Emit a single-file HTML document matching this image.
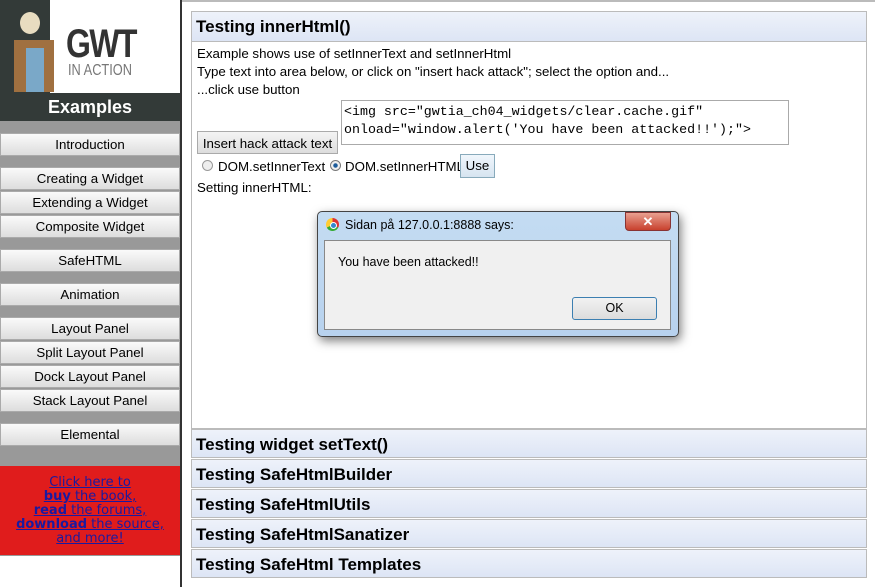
<!DOCTYPE html>
<html><head><style>
body{margin:0;width:875px;height:587px;overflow:hidden;background:#fff;font-family:"Liberation Sans",Arial,sans-serif;position:relative}
.abs{position:absolute}
#side{left:0;top:0;width:180px;height:556px;background:#999;border-right:2px solid #333}
#vline{left:180px;top:0;width:2px;height:587px;background:#333}
.btn{position:absolute;left:0;width:178px;height:21px;border:1px solid #aaa;background:linear-gradient(#fafafa,#ddd);font-size:13.3px;text-align:center;line-height:21px;color:#000}
.hd{position:absolute;left:191px;height:29px;border:1px solid #bbb;background:linear-gradient(#eef2fa,#dde5f5);font-size:17px;font-weight:bold;line-height:29px;padding-left:4px;box-sizing:border-box;width:676px}
.t{font-size:13.3px;position:absolute;left:197px}
</style></head><body>
<div class="abs" style="left:0;top:0;width:875px;height:2px;background:#bbb"></div>
<div class="abs" id="side"></div>
<div class="abs" style="left:0;top:0;width:180px;height:93px;background:#fff"></div>
<div class="abs" style="left:0;top:0;width:50px;height:93px;background:#333a38"></div>
<div class="abs" style="left:20px;top:12px;width:20px;height:22px;border-radius:50%;background:#e8dcc0"></div>
<div class="abs" style="left:14px;top:40px;width:40px;height:52px;background:#a07040"></div>
<div class="abs" style="left:26px;top:48px;width:18px;height:44px;background:#7aa8c8"></div>
<div class="abs" style="left:66px;top:22px;font-size:40px;font-weight:bold;color:#333;letter-spacing:-2px;transform:scaleX(.8);transform-origin:left">GWT</div>
<div class="abs" style="left:68px;top:62px;font-size:16px;color:#777;transform:scaleX(.8);transform-origin:left">IN ACTION</div>
<div class="abs" style="left:0;top:93px;width:180px;height:28px;background:#333a38;color:#fff;font-size:18px;font-weight:bold;text-align:center;line-height:28px">Examples</div>
<div class="btn" style="top:133px">Introduction</div>
<div class="btn" style="top:167px">Creating a Widget</div>
<div class="btn" style="top:191px">Extending a Widget</div>
<div class="btn" style="top:215px">Composite Widget</div>
<div class="btn" style="top:249px">SafeHTML</div>
<div class="btn" style="top:283px">Animation</div>
<div class="btn" style="top:317px">Layout Panel</div>
<div class="btn" style="top:341px">Split Layout Panel</div>
<div class="btn" style="top:365px">Dock Layout Panel</div>
<div class="btn" style="top:389px">Stack Layout Panel</div>
<div class="btn" style="top:423px">Elemental</div>
<div class="abs" style="left:0;top:466px;width:180px;height:89px;background:#e01c1c;font-family:'DejaVu Sans',sans-serif;font-size:13px;line-height:14px;text-align:center;color:#1a1aa0;padding-top:10px;box-sizing:border-box"><u>Click here to<br><b>buy</b> the book,<br><b>read</b> the forums,<br><b>download</b> the source,<br>and more!</u></div>
<div class="abs" id="vline"></div>
<div class="abs" style="left:191px;top:11px;width:676px;height:418px;border:1px solid #bbb;box-sizing:border-box"></div>
<div class="hd" style="top:11px;height:31px">Testing innerHtml()</div>
<div class="t" style="top:46px">Example shows use of setInnerText and setInnerHtml</div>
<div class="t" style="top:64px">Type text into area below, or click on "insert hack attack"; select the option and...</div>
<div class="t" style="top:82px">...click use button</div>
<div class="abs" style="left:341px;top:100px;width:448px;height:45px;border:1px solid #aaa;box-sizing:border-box;font-family:'Liberation Mono',monospace;font-size:13.3px;line-height:18px;padding:2px 2px;white-space:nowrap">&lt;img src="gwtia_ch04_widgets/clear.cache.gif"<br>onload="window.alert('You have been attacked!!');"&gt;</div>
<div class="abs" style="left:197px;top:131px;width:141px;height:23px;border:1px solid #aaa;background:linear-gradient(#f4f4f4,#ddd);font-size:13.3px;text-align:center;line-height:23px;box-sizing:border-box">Insert hack attack text</div>
<div class="abs" style="left:202px;top:160px;width:11px;height:11px;border:1px solid #999;border-radius:50%;background:#eee;box-sizing:border-box"></div>
<div class="t" style="left:218px;top:159px">DOM.setInnerText</div>
<div class="abs" style="left:330px;top:160px;width:11px;height:11px;border:1px solid #777;border-radius:50%;background:radial-gradient(#1a5a9a 30%,#eee 40%);box-sizing:border-box"></div>
<div class="t" style="left:345px;top:159px">DOM.setInnerHTML</div>
<div class="abs" style="left:460px;top:154px;width:35px;height:24px;border:1px solid #8ab;background:linear-gradient(#f0f6fc,#d6e4f0);font-size:13.3px;text-align:center;line-height:22px;box-sizing:border-box">Use</div>
<div class="t" style="top:180px">Setting innerHTML:</div>
<div class="hd" style="top:429px">Testing widget setText()</div>
<div class="hd" style="top:459px">Testing SafeHtmlBuilder</div>
<div class="hd" style="top:489px">Testing SafeHtmlUtils</div>
<div class="hd" style="top:519px">Testing SafeHtmlSanatizer</div>
<div class="hd" style="top:549px">Testing SafeHtml Templates</div>
<!-- dialog -->
<div class="abs" style="left:317px;top:211px;width:362px;height:126px;border:1px solid #444;border-radius:5px;background:linear-gradient(#c4dcf2,#b8d2ee);box-shadow:2px 4px 10px rgba(0,0,0,.5);box-sizing:border-box"></div>
<div class="abs" style="left:326px;top:218px;width:13px;height:13px;border-radius:50%;background:conic-gradient(#d33 0 120deg,#3a3 120deg 240deg,#fc3 240deg);"></div>
<div class="abs" style="left:330px;top:222px;width:5px;height:5px;border-radius:50%;background:#38c;border:1px solid #fff"></div>
<div class="abs" style="left:345px;top:218px;font-size:12.5px">Sidan på 127.0.0.1:8888 says:</div>
<div class="abs" style="left:625px;top:212px;width:46px;height:19px;border:1px solid #833;border-radius:0 0 4px 4px;background:linear-gradient(#e9a090,#c8412e);color:#fff;font-weight:bold;font-size:13px;text-align:center;line-height:18px;box-sizing:border-box">✕</div>
<div class="abs" style="left:324px;top:240px;width:347px;height:90px;border:1px solid #888;background:#f0f0f0;box-sizing:border-box"></div>
<div class="abs" style="left:338px;top:255px;font-size:12.5px">You have been attacked!!</div>
<div class="abs" style="left:572px;top:297px;width:85px;height:23px;border:1px solid #3c7fb1;border-radius:3px;background:linear-gradient(#f2f2f2,#dcdcdc);font-size:12.5px;text-align:center;line-height:21px;box-sizing:border-box">OK</div>
</body></html>
